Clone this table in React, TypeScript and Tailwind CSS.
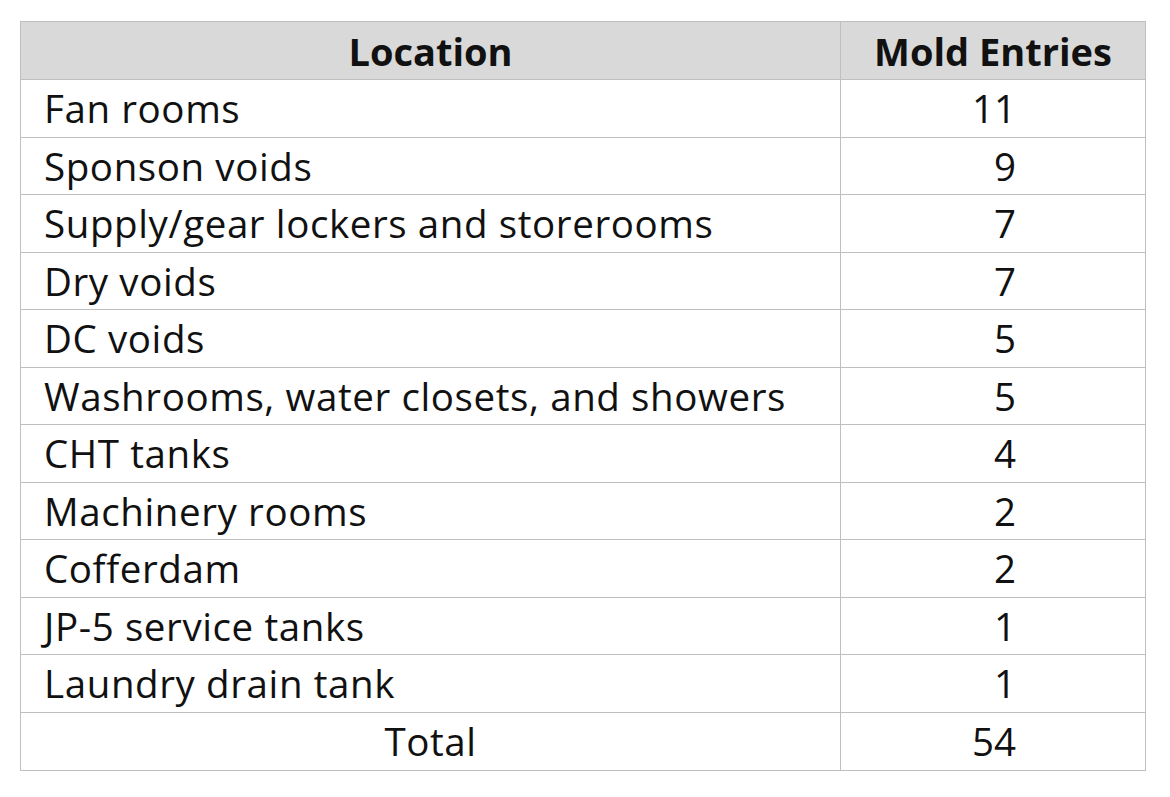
const rows: [string, number][] = [
  ["Fan rooms", 11],
  ["Sponson voids", 9],
  ["Supply/gear lockers and storerooms", 7],
  ["Dry voids", 7],
  ["DC voids", 5],
  ["Washrooms, water closets, and showers", 5],
  ["CHT tanks", 4],
  ["Machinery rooms", 2],
  ["Cofferdam", 2],
  ["JP-5 service tanks", 1],
  ["Laundry drain tank", 1],
]

export default function App() {
  return (
    <div className="min-h-screen bg-white pt-[21px] pl-[20px] font-['Open_Sans',sans-serif] text-[38.5px] text-[#111]">
      <table className="w-[1126px] border-collapse border border-[#bfbfbf]">
        <thead>
          <tr className="h-[58px] bg-[#d9d9d9]">
            <th className="w-[820px] border border-[#bfbfbf] text-center text-[38px] font-bold leading-none">
              Location
            </th>
            <th className="border border-[#bfbfbf] text-center text-[38px] font-bold leading-none">
              Mold Entries
            </th>
          </tr>
        </thead>
        <tbody>
          {rows.map(([name, count]) => (
            <tr key={name} className="h-[57.5px]">
              <td className="border border-[#bfbfbf] pl-[23px] leading-none tracking-[0.6px]">{name}</td>
              <td className="border border-[#bfbfbf] pr-[129px] text-right leading-none">
                {count}
              </td>
            </tr>
          ))}
          <tr className="h-[58px]">
            <td className="border border-[#bfbfbf] text-center leading-none tracking-[0.6px]">Total</td>
            <td className="border border-[#bfbfbf] pr-[129px] text-right leading-none">54</td>
          </tr>
        </tbody>
      </table>
    </div>
  )
}
